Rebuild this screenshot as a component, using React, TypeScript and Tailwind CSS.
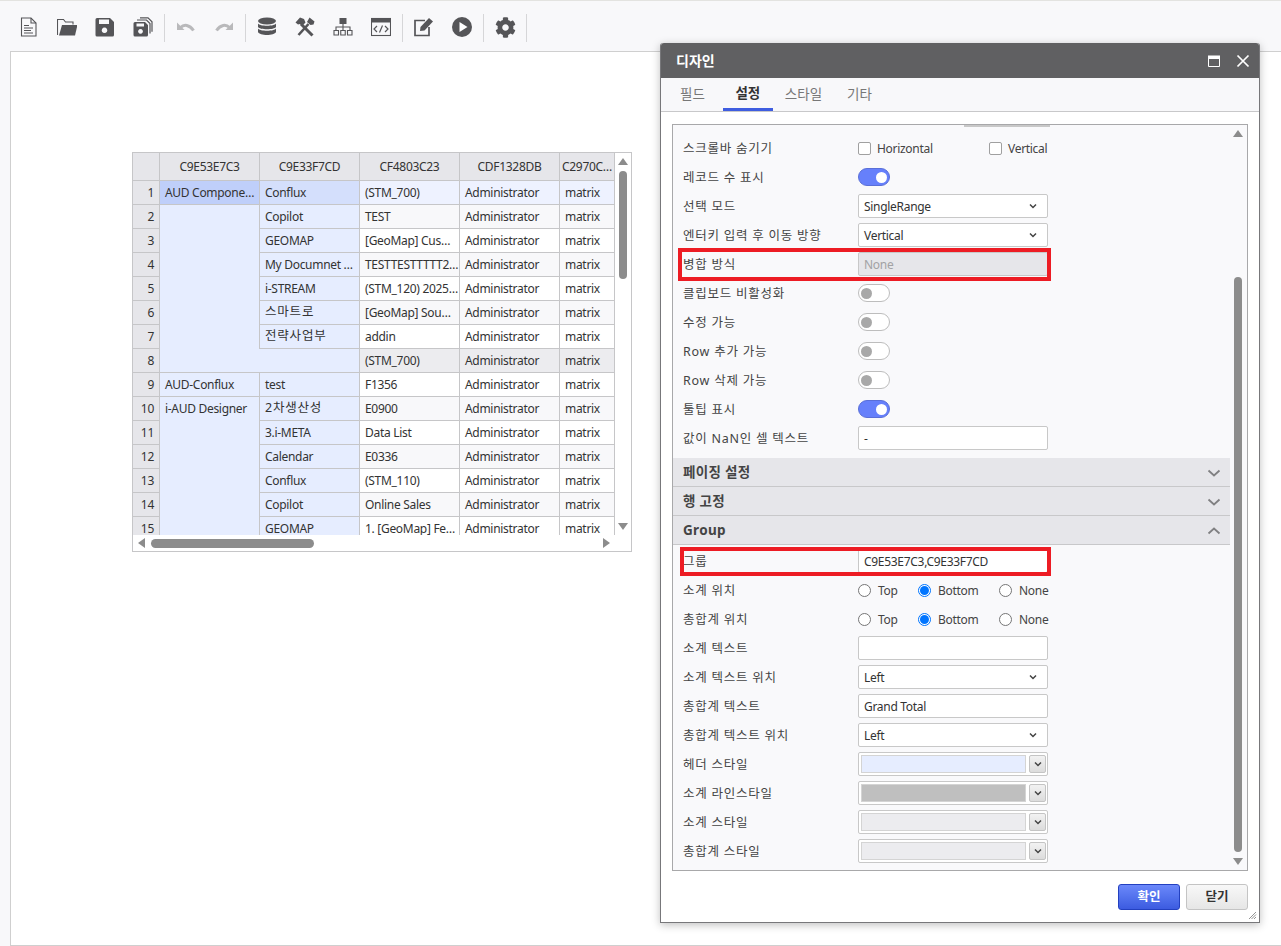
import React from 'react';
import { FaCog } from 'react-icons/fa';

const iconColor = '#555558';

const Svg = ({ children }: { children: React.ReactNode }) => (
  <svg width="20" height="20" viewBox="0 0 20 20" fill="none">{children}</svg>
);

const FileIcon = () => (
  <Svg>
    <path d="M2.5 1h9.500l5 5v13h-14.500z" stroke={iconColor} strokeWidth="1.100" />
    <path d="M12 1v5h5" stroke={iconColor} strokeWidth="1.100" />
    <path d="M5 8.500h5M5 11h9M5 13.500h7M5 16h9" stroke={iconColor} strokeWidth="1.100" />
  </Svg>
);

const FolderIcon = () => (
  <Svg>
    <path d="M0.500 18V2.500h6l2 2.500h7.500v2.500" stroke={iconColor} strokeWidth="1.100" />
    <path d="M5 8h15.500l-2.500 10.500h-16z" fill={iconColor} />
  </Svg>
);

const SaveIcon = () => (
  <Svg>
    <path fillRule="evenodd" clipRule="evenodd" fill={iconColor}
      d="M2 1h13l4 4v13a1.500 1.500 0 0 1-1.500 1.500h-15.500a1.500 1.500 0 0 1-1.500-1.500v-15.500a1.500 1.500 0 0 1 1.500-1.500zM4 2.500v4.500h10v-4.500zM9.500 10.500a2.800 2.800 0 1 0 0.010 0z" />
  </Svg>
);

const SaveAllIcon = () => (
  <Svg>
    <path fillRule="evenodd" clipRule="evenodd" fill={iconColor}
      d="M2 5h10l3 3v10a1.500 1.500 0 0 1-1.500 1.500h-11.500a1.500 1.500 0 0 1-1.500-1.500v-11.500a1.500 1.500 0 0 1 1.500-1.500zM3.500 6.500v3h7.500v-3zM7.500 12a2.400 2.400 0 1 0 0.010 0z" />
    <path d="M4 3h9.500l3.500 3.500v10" stroke={iconColor} strokeWidth="1.200" />
    <path d="M7 0.800h8l4 4v10" stroke={iconColor} strokeWidth="1.200" />
  </Svg>
);

const UndoIcon = ({ flip }: { flip?: boolean }) => (
  <svg width="20" height="20" viewBox="0 0 20 20" fill="none" className={flip ? '-scale-x-100' : ''}>
    <path d="M1 5.500v7.500h7.500z" fill="#b9b9bb" />
    <path d="M4.500 10.500c3.500-3.500 9-3 13 3" stroke="#b9b9bb" strokeWidth="3" />
  </svg>
);

const DatabaseIcon = () => (
  <Svg>
    <ellipse cx="10" cy="4" rx="9" ry="3.500" fill={iconColor} />
    <path d="M1 6.500c1.500 3 16.500 3 18 0v3.500c-1.500 3-16.500 3-18 0z" fill={iconColor} />
    <path d="M1 11.500c1.500 3 16.500 3 18 0v3.500c-1.500 4-16.500 4-18 0z" fill={iconColor} />
  </Svg>
);

const ToolsIcon = () => (
  <Svg>
    <path d="M6 7l11.500 11.500" stroke={iconColor} strokeWidth="3" />
    <path d="M0.500 5.500l4.500-5 4 1.500 1.500 3.500-3.500 3.500-2-2-2 0.500z" fill={iconColor} />
    <path d="M3.500 18l10-11" stroke={iconColor} strokeWidth="2.600" />
    <path d="M12 5l2.500-4.500 5 4-1 3-3 0.500z" fill={iconColor} />
  </Svg>
);

const SitemapIcon = () => (
  <Svg>
    <rect x="6.500" y="1" width="7" height="6" fill={iconColor} />
    <path d="M10 7v6M3 13v-3h14v3" stroke={iconColor} strokeWidth="1.100" />
    <path d="M1 13.500h4.500v4.500h-4.500zM7.750 13.500h4.500v4.500h-4.500zM14.500 13.500h4.500v4.500h-4.500z" stroke={iconColor} strokeWidth="1.100" />
  </Svg>
);

const CodeIcon = () => (
  <Svg>
    <rect x="0.500" y="1.500" width="19" height="17" stroke={iconColor} strokeWidth="1.100" />
    <rect x="0.500" y="1.500" width="19" height="4" fill={iconColor} />
    <path d="M6 9l-3 3 3 3M14 9l3 3-3 3M11.500 8.500l-3 7" stroke={iconColor} strokeWidth="1.200" />
  </Svg>
);

const EditIcon = () => (
  <Svg>
    <path d="M15 10v8.500h-14v-15h10" stroke={iconColor} strokeWidth="1.700" />
    <path d="M6.500 10l8.500-9 4 3.500-8.500 9-4.500 0.500z" fill={iconColor} />
  </Svg>
);

const PlayIcon = () => (
  <Svg>
    <circle cx="10" cy="10" r="10" fill={iconColor} />
    <path d="M7.500 5l8 5-8 5z" fill="#fff" />
  </Svg>
);

const ToolButton = ({ children }: { children: React.ReactNode }) => (
  <div className="w-[38px] flex items-center justify-center pb-[2px]">{children}</div>
);

const Sep = () => <div className="w-px h-[28px] mx-[2px] bg-[#d6d6d8]" />;

const Toolbar = () => (
  <div className="h-[51px] flex items-center pl-[10px] pt-[4px] border-t border-[#e3e3e0]">
    <ToolButton><FileIcon /></ToolButton>
    <ToolButton><FolderIcon /></ToolButton>
    <ToolButton><SaveIcon /></ToolButton>
    <ToolButton><SaveAllIcon /></ToolButton>
    <Sep />
    <ToolButton><UndoIcon /></ToolButton>
    <ToolButton><UndoIcon flip /></ToolButton>
    <Sep />
    <ToolButton><DatabaseIcon /></ToolButton>
    <ToolButton><ToolsIcon /></ToolButton>
    <ToolButton><SitemapIcon /></ToolButton>
    <ToolButton><CodeIcon /></ToolButton>
    <Sep />
    <ToolButton><EditIcon /></ToolButton>
    <ToolButton><PlayIcon /></ToolButton>
    <Sep />
    <ToolButton><FaCog size={21} color={iconColor} /></ToolButton>
    <Sep />
  </div>
);

const rows: { n: number; c2?: string; c3: string; bg: string; ko?: boolean }[] = [
  { n: 1, c2: 'Conflux', c3: '(STM_700)', bg: 'bg-[#eef2ff]' },
  { n: 2, c2: 'Copilot', c3: 'TEST', bg: 'bg-[#f8f8fa]' },
  { n: 3, c2: 'GEOMAP', c3: '[GeoMap] Cus…', bg: 'bg-white' },
  { n: 4, c2: 'My Documnet …', c3: 'TESTTESTTTTT2…', bg: 'bg-[#f8f8fa]' },
  { n: 5, c2: 'i-STREAM', c3: '(STM_120) 2025…', bg: 'bg-white' },
  { n: 6, c2: '스마트로', c3: '[GeoMap] Sou…', bg: 'bg-[#f8f8fa]', ko: true },
  { n: 7, c2: '전략사업부', c3: 'addin', bg: 'bg-white', ko: true },
  { n: 8, c3: '(STM_700)', bg: 'bg-[#ececef]' },
  { n: 9, c2: 'test', c3: 'F1356', bg: 'bg-white' },
  { n: 10, c2: '2차생산성', c3: 'E0900', bg: 'bg-[#f8f8fa]', ko: true },
  { n: 11, c2: '3.i-META', c3: 'Data List', bg: 'bg-white' },
  { n: 12, c2: 'Calendar', c3: 'E0336', bg: 'bg-[#f8f8fa]' },
  { n: 13, c2: 'Conflux', c3: '(STM_110)', bg: 'bg-white' },
  { n: 14, c2: 'Copilot', c3: 'Online Sales', bg: 'bg-[#f8f8fa]' },
  { n: 15, c2: 'GEOMAP', c3: '1. [GeoMap] Fe…', bg: 'bg-white' },
];

const cell = 'flex items-center whitespace-nowrap overflow-hidden border-r border-b border-[#c6c6c8] min-w-0';
const textCell = `${cell} pl-[5px] pr-[1px]`;

const DataGrid = () => (
  <div className="w-[500px] h-[400px] border border-[#c6c6c8] bg-white flex flex-col text-[12px] tracking-[-0.3px] text-[#333]">
    <div className="flex h-[382px]">
      <div className="w-[482px] h-[382px] overflow-hidden grid grid-cols-[27px_100px_100px_100px_100px_55px] grid-rows-[28px] auto-rows-[24px]">
        <div className={`${cell} bg-[#e6e6ea]`} />
        {['C9E53E7C3', 'C9E33F7CD', 'CF4803C23', 'CDF1328DB', 'C2970C…'].map(h => (
          <div key={h} className={`${cell} bg-[#e6e6ea] justify-center`}>{h}</div>
        ))}
        {rows.map(r => (
          <React.Fragment key={r.n}>
            <div className={`${cell} bg-[#e6e6ea] justify-end pr-[5px]`}>{r.n}</div>
            {r.n === 1 && <div className={`${textCell} bg-[#bfcffa]`}>AUD Compone…</div>}
            {r.n === 2 && <div className={`${textCell} row-span-6 bg-[#e6edff] border-b-0`} />}
            {r.n === 9 && <div className={`${textCell} bg-[#e6edff]`}>AUD-Conflux</div>}
            {r.n === 10 && <div className={`${textCell} row-span-6 bg-[#e6edff] items-start pt-[3px] border-b-0`}>i-AUD Designer</div>}
            {r.n === 8 ? (
              <div className={`${textCell} col-span-2 bg-[#e6edff]`} />
            ) : (
              <div className={`${textCell} ${r.n === 1 ? 'bg-[#d4dffc]' : 'bg-[#e6edff]'} ${r.ko ? 'text-[12.500px] tracking-[0.8px]' : ''}`}>{r.c2}</div>
            )}
            <div className={`${textCell} ${r.bg}`}>{r.c3}</div>
            <div className={`${textCell} ${r.bg}`}>Administrator</div>
            <div className={`${textCell} ${r.bg}`}>matrix</div>
          </React.Fragment>
        ))}
      </div>
      <div className="w-[16px] flex flex-col items-center">
        <div className="h-[18px] flex items-center justify-center"><Tri dir="up" /></div>
        <div className="w-[8px] h-[108px] rounded-full bg-[#8c8c8c]" />
        <div className="flex-1" />
        <div className="h-[18px] flex items-center justify-center"><Tri dir="down" /></div>
      </div>
    </div>
    <div className="h-[16px] flex items-center pl-[4px] pr-[20px]">
      <Tri dir="left" />
      <div className="ml-[4px] w-[163px] h-[9px] rounded-full bg-[#8c8c8c]" />
      <div className="flex-1" />
      <Tri dir="right" />
    </div>
  </div>
);

const Tri = ({ dir }: { dir: 'up' | 'down' | 'left' | 'right' }) => {
  const pts = { up: '0,8 5,1 10,8', down: '0,2 10,2 5,9', left: '8,0 8,10 1,5', right: '2,0 2,10 9,5' }[dir];
  return (
    <svg width="10" height="10" viewBox="0 0 10 10"><polygon points={pts} fill="#8c8c8c" /></svg>
  );
};

const Row = ({ label, children, mark }: { label: string; children?: React.ReactNode; mark?: string }) => (
  <div className="relative h-[29px] flex items-center pl-[10px]">
    <div className="w-[175px] shrink-0 pt-[2px] text-[#444] text-[12.5px] tracking-[0.75px] whitespace-nowrap">{label}</div>
    <div className="w-[190px] flex items-center -mt-[1px]">{children}</div>
    {mark && <div className={`absolute border-[4px] border-[#ed1c24] ${mark}`} />}
  </div>
);

const Chevron = () => (
  <svg width="10" height="10" viewBox="0 0 10 10" fill="none" className="shrink-0">
    <path d="M2 3.500l3 3 3-3" stroke="#444" strokeWidth="1.500" />
  </svg>
);

const Select = ({ value }: { value: string }) => (
  <div className="w-[190px] h-[24px] flex items-center justify-between pl-[5px] pr-[9px] bg-white border border-[#c8c8c8] rounded-[2px] text-[#333]">
    <span className="pt-[2px]">{value}</span>
    <Chevron />
  </div>
);

const Input = ({ value, disabled }: { value?: string; disabled?: boolean }) => (
  <div className={`w-[190px] h-[24px] flex items-center px-[5px] border border-[#c8c8c8] rounded-[2px] ${disabled ? 'bg-[#e6e6ea] text-[#a2a2a4]' : 'bg-white text-[#333]'}`}>
    <span className="pt-[2px]">{value}</span>
  </div>
);

const Toggle = ({ on }: { on?: boolean }) => (
  <div className={`w-[32px] h-[18px] rounded-full border flex items-center px-[2px] ${on ? 'bg-[#6680fb] border-[#5a6fd8] justify-end' : 'bg-white border-[#bdbdbd] justify-start'}`}>
    <div className={`w-[11px] h-[11px] rounded-full ${on ? 'bg-white' : 'bg-[#a8a8a8]'}`} />
  </div>
);

const Check = ({ label, className }: { label: string; className: string }) => (
  <div className={`flex items-center gap-[6px] text-[#444] whitespace-nowrap ${className}`}>
    <div className="w-[13px] h-[13px] shrink-0 bg-white border border-[#a0a0a0] rounded-[2px]" />
    <span className="pt-[2px]">{label}</span>
  </div>
);

const Radio = ({ label, on, className }: { label: string; on?: boolean; className: string }) => (
  <div className={`flex items-center gap-[7px] text-[#444] whitespace-nowrap ${className}`}>
    {on ? (
      <div className="w-[13px] h-[13px] shrink-0 rounded-full border border-[#0075ff] bg-white flex items-center justify-center">
        <div className="w-[9px] h-[9px] rounded-full bg-[#0075ff]" />
      </div>
    ) : (
      <div className="w-[13px] h-[13px] shrink-0 rounded-full border border-[#767676] bg-white" />
    )}
    <span className="pt-[2px]">{label}</span>
  </div>
);

const RadioSet = () => (
  <>
    <Radio label="Top" className="w-[60px]" />
    <Radio label="Bottom" on className="w-[81px]" />
    <Radio label="None" className="w-[49px]" />
  </>
);

const ColorPick = ({ swatch }: { swatch: string }) => (
  <div className="w-[190px] h-[24px] flex items-center pl-[2px] bg-white border border-[#c8c8c8] rounded-[2px]">
    <div className={`w-[165px] h-[18px] border border-[#d4d4d4] ${swatch}`} />
    <div className="ml-[3px] w-[17px] h-[18px] flex items-center justify-center rounded-[2px] border border-[#c4c4c4] bg-gradient-to-b from-[#f2f2f2] to-[#dcdcdc]">
      <Chevron />
    </div>
  </div>
);

const Section = ({ label, open }: { label: string; open?: boolean }) => (
  <div className="h-[29px] flex items-center justify-between pl-[10px] pr-[9px] pt-[1px] bg-[#e6e6ea] border-b border-[#c8c8ca] font-bold text-[#444] text-[13.5px] tracking-[0.3px]">
    {label}
    <svg width="14" height="10" viewBox="0 0 14 10" fill="none" className={open ? 'rotate-180' : ''}>
      <path d="M1.500 2.500l5.500 5 5.500-5" stroke="#808082" strokeWidth="1.800" />
    </svg>
  </div>
);

const DesignDialog = () => (
  <div className="absolute left-[660px] top-[43px] w-[600px] h-[880px] bg-white border border-[#77777a] border-t-0 rounded-t-[3px] shadow-[0_2px_8px_rgba(0,0,0,0.25)] flex flex-col text-[12px] tracking-[-0.3px]">
    <div className="h-[35px] bg-[#606062] rounded-t-[3px] flex items-center justify-between pl-[15px] pr-[8px] text-white font-bold text-[14px] tracking-normal">
      디자인
      <div className="flex items-center gap-[14px]">
        <svg width="14" height="14" viewBox="0 0 14 14" fill="none">
          <path d="M1.500 2v10.500h11v-10.500" stroke="#fff" strokeWidth="1" />
          <rect x="1" y="1.500" width="12" height="3.500" fill="#fff" />
        </svg>
        <svg width="16" height="16" viewBox="0 0 16 16" fill="none">
          <path d="M2.500 2.500l11 11M13.500 2.500l-11 11" stroke="#fff" strokeWidth="1.700" />
        </svg>
      </div>
    </div>

    <div className="h-[34px] bg-[#f8f8fa] border-b border-[#c8c8ca] flex items-stretch pl-[7px] text-[13.5px] tracking-normal text-[#777]">
      <div className="px-[12px] flex items-center pb-[1px]">필드</div>
      <div className="ml-[6px] w-[50px] flex items-center justify-center pt-[1px] font-bold text-[#333] border-b-[3px] border-[#3f5de0]">설정</div>
      <div className="ml-[12px] flex items-center pb-[1px]">스타일</div>
      <div className="ml-[25px] flex items-center pb-[1px]">기타</div>
    </div>

    <div className="mx-[11px] mt-[12px] h-[747px] border border-[#a8a8aa] bg-[#f9f9fb] flex overflow-hidden">
      <div className="w-[557px] shrink-0">
        <div className="h-[9px] relative">
          <div className="absolute left-[291px] top-0 w-[86px] h-[2px] bg-[#c8c8c8]" />
        </div>
        <Row label="스크롤바 숨기기">
          <Check label="Horizontal" className="w-[131px]" />
          <Check label="Vertical" className="w-[59px]" />
        </Row>
        <Row label="레코드 수 표시"><Toggle on /></Row>
        <Row label="선택 모드"><Select value="SingleRange" /></Row>
        <Row label="엔터키 입력 후 이동 방향"><Select value="Vertical" /></Row>
        <Row label="병합 방식" mark="left-[5px] top-[-2px] w-[373px] h-[33px]"><Input value="None" disabled /></Row>
        <Row label="클립보드 비활성화"><Toggle /></Row>
        <Row label="수정 가능"><Toggle /></Row>
        <Row label="Row 추가 가능"><Toggle /></Row>
        <Row label="Row 삭제 가능"><Toggle /></Row>
        <Row label="툴팁 표시"><Toggle on /></Row>
        <Row label="값이 NaN인 셀 텍스트"><Input value="-" /></Row>
        <div className="mt-[5px]" />
        <Section label="페이징 설정" />
        <Section label="행 고정" />
        <Section label="Group" open />
        <div className="mt-[2px]" />
        <Row label="그룹" mark="left-[7px] top-[0px] w-[371px] h-[29px]"><Input value="C9E53E7C3,C9E33F7CD" /></Row>
        <Row label="소계 위치"><RadioSet /></Row>
        <Row label="총합계 위치"><RadioSet /></Row>
        <Row label="소계 텍스트"><Input /></Row>
        <Row label="소계 텍스트 위치"><Select value="Left" /></Row>
        <Row label="총합계 텍스트"><Input value="Grand Total" /></Row>
        <Row label="총합계 텍스트 위치"><Select value="Left" /></Row>
        <Row label="헤더 스타일"><ColorPick swatch="bg-[#e6edff]" /></Row>
        <Row label="소계 라인스타일"><ColorPick swatch="bg-[#bfbfbf]" /></Row>
        <Row label="소계 스타일"><ColorPick swatch="bg-[#ececef]" /></Row>
        <Row label="총합계 스타일"><ColorPick swatch="bg-[#ececef]" /></Row>
      </div>
      <div className="flex-1 flex flex-col items-center pr-[1px]">
        <div className="h-[18px] flex items-center justify-center"><Tri dir="up" /></div>
        <div className="mt-[134px] w-[8px] h-[576px] rounded-full bg-[#8c8c8c]" />
        <div className="h-[18px] flex items-center justify-center"><Tri dir="down" /></div>
      </div>
    </div>

    <div className="flex-1 relative flex justify-end gap-[6px] pt-[13px] pr-[11px] text-[12.5px] tracking-normal">
      <div className="w-[62px] h-[26px] rounded-[3px] border border-[#2340c0] bg-gradient-to-b from-[#6b88fa] to-[#3c5be0] text-white font-bold flex items-center justify-center">확인</div>
      <div className="w-[62px] h-[26px] rounded-[3px] border border-[#c4c4c4] bg-gradient-to-b from-[#f8f8f8] to-[#e6e6e6] text-[#333] font-bold flex items-center justify-center">닫기</div>
      <svg width="9" height="9" viewBox="0 0 9 9" fill="none" className="absolute right-[2px] bottom-[2px]">
        <path d="M8 1l-7 7M8 3.500l-4.500 4.500M8 6l-2 2" stroke="#777" strokeWidth="0.800" />
      </svg>
    </div>
  </div>
);

export default function App() {
  return (
    <div className="relative w-full h-[946px] overflow-hidden bg-[#f8f8fa] flex flex-col font-['Noto_Sans','Noto_Sans_CJK_KR',sans-serif]">
      <Toolbar />
      <div className="flex-1 ml-[10px] bg-white border border-r-0 border-[#cfcfcf] pl-[121px] pt-[100px]">
        <DataGrid />
      </div>
      <DesignDialog />
    </div>
  );
}
